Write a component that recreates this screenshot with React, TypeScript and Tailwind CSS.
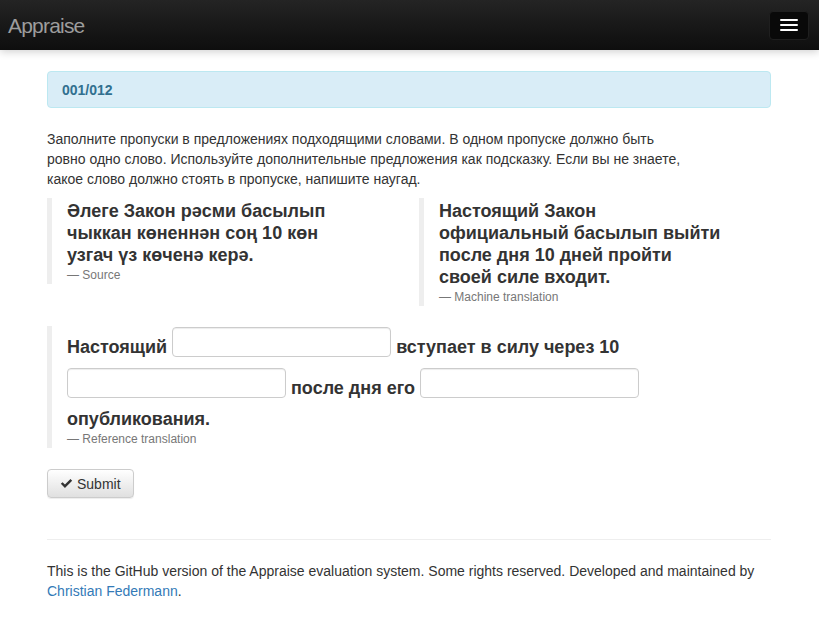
import React from "react";

function Gap() {
  return (
    <span className="inline-block overflow-hidden align-[-14px] mt-[1px] mb-[10px]">
      <input
        type="text"
        className="block w-[219px] h-[30px] border border-[#ccc] rounded-[4px] bg-white shadow-[inset_0_1px_1px_rgba(0,0,0,0.075)] outline-none px-[10px] text-[14px] font-normal"
      />
    </span>
  );
}

export default function App() {
  return (
    <div
      className="min-h-[623px] bg-white text-[#333] text-[14px] leading-[20px]"
      style={{ fontFamily: '"Liberation Sans", Arial, Helvetica, sans-serif' }}
    >
      <nav className="h-[50px] flex items-center justify-between pl-[8px] pr-[10px] bg-gradient-to-b from-[#242424] to-[#0e0e0e] shadow-[0_2px_8px_rgba(0,0,0,0.18)]">
        <span className="text-[21px] tracking-[-0.8px] text-[#9d9d9d] leading-[24px] pt-[1px]">Appraise</span>
        <button className="w-[40px] h-[29px] rounded-[4px] bg-[#090909] border border-[#1f1f1f] flex flex-col items-center justify-center gap-[3px]">
          <span className="block w-[18px] h-[2px] bg-white rounded-[1px]" />
          <span className="block w-[18px] h-[2px] bg-white rounded-[1px]" />
          <span className="block w-[18px] h-[2px] bg-white rounded-[1px]" />
        </button>
      </nav>

      <main className="ml-[47px] w-[724px]">
        <div className="mt-[21px] h-[37px] flex items-center px-[14px] rounded-[4px] border border-[#bce8f1] bg-[#d9edf7] text-[#31708f] font-bold">
          001/012
        </div>

        <p className="mt-[21px]">
          Заполните пропуски в предложениях подходящими словами. В одном пропуске должно быть
          <br />
          ровно одно слово. Используйте дополнительные предложения как подсказку. Если вы не знаете,
          <br />
          какое слово должно стоять в пропуске, напишите наугад.
        </p>

        <div className="mt-[9px] grid grid-cols-[372px_1fr] items-start">
          <blockquote className="border-l-[5px] border-[#eee] pl-[15px] pt-[2px]">
            <p className="text-[18px] leading-[22px] font-bold">
              Әлеге Закон рәсми басылып
              <br />
              чыккан көненнән соң 10 көн
              <br />
              узгач үз көченә керә.
            </p>
            <div className="mt-[1px] text-[12px] leading-[17px] text-[#777]">— Source</div>
          </blockquote>
          <blockquote className="border-l-[5px] border-[#eee] pl-[15px] pt-[2px]">
            <p className="text-[18px] leading-[22px] font-bold">
              Настоящий Закон
              <br />
              официальный басылып выйти
              <br />
              после дня 10 дней пройти
              <br />
              своей силе входит.
            </p>
            <div className="mt-[1px] text-[12px] leading-[17px] text-[#777]">— Machine translation</div>
          </blockquote>
        </div>

        <blockquote className="mt-[20px] border-l-[5px] border-[#eee] pl-[15px]">
          <p className="text-[18px] leading-[22px] font-bold">
            Настоящий <Gap /> вступает в силу через 10 <Gap /> после дня его <Gap /> опубликования.
          </p>
          <div className="pt-[1px] text-[12px] leading-[17px] text-[#777]">— Reference translation</div>
        </blockquote>

        <button className="mt-[21px] h-[29px] px-[12px] flex items-center gap-[4px] rounded-[4px] border border-[#ccc] bg-gradient-to-b from-white to-[#e0e0e0] text-[#333] text-[14px] shadow-[0_1px_1px_rgba(0,0,0,0.075)]">
          <svg width="13" height="11" viewBox="0 0 14 12" aria-hidden="true">
            <path d="M0.8 6.4 L2.7 4.5 L5.3 7.1 L11.3 1.1 L13.2 3 L5.3 10.9 Z" fill="#333" />
          </svg>
          <span>Submit</span>
        </button>

        <hr className="mt-[41px] border-0 border-t border-[#eee]" />

        <p className="mt-[21px]">
          This is the GitHub version of the Appraise evaluation system. Some rights reserved. Developed and
          maintained by <a className="text-[#337ab7]">Christian Federmann</a>.
        </p>
      </main>
    </div>
  );
}
